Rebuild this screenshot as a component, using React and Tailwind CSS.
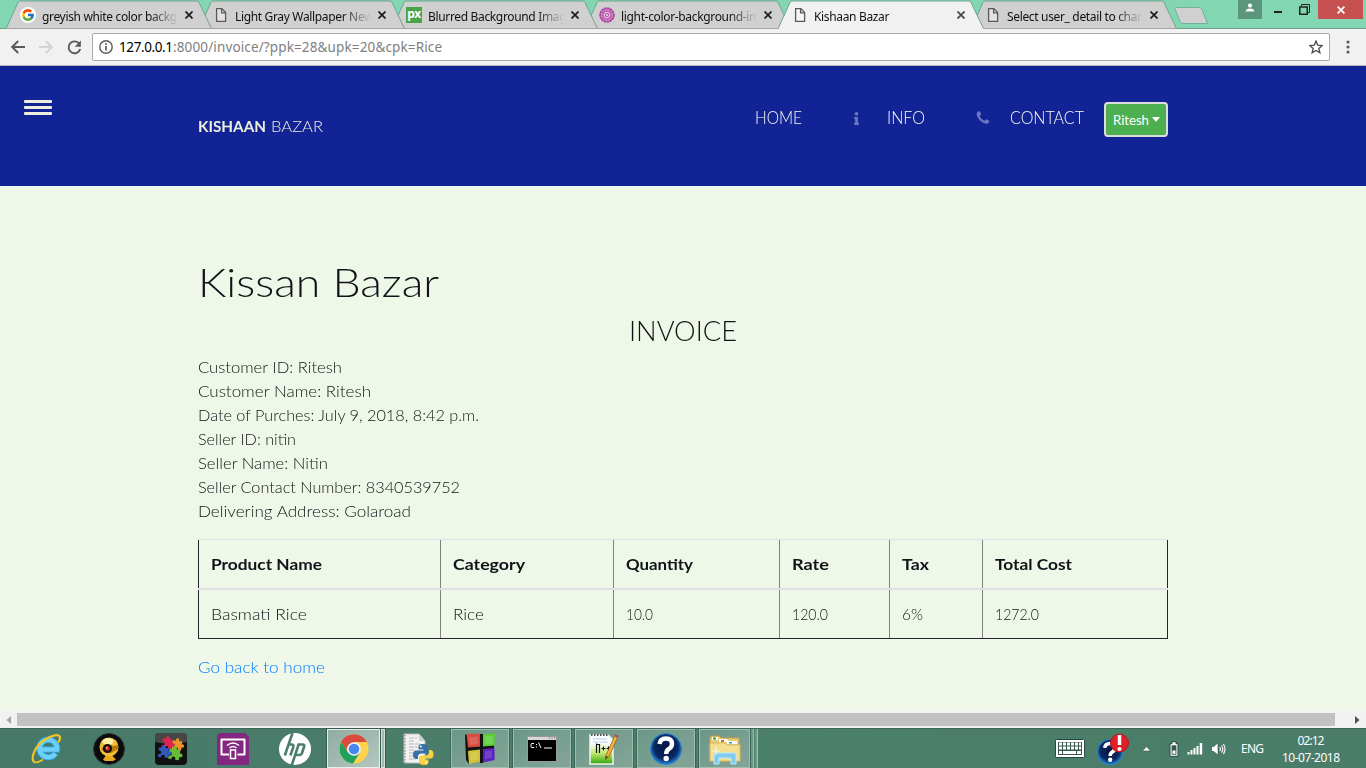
import React, { useLayoutEffect, useRef } from "react";
import { FcGoogle } from "react-icons/fc";
import { FaInfo } from "react-icons/fa";

function Fit({ w, stretch, className = "", children }) {
  const ref = useRef(null);
  useLayoutEffect(() => {
    const el = ref.current;
    const fit = () => {
      el.style.transform = "none";
      el.style.letterSpacing = "0px";
      el.style.width = "auto";
      const natural = el.getBoundingClientRect().width;
      if (stretch) {
        el.style.transformOrigin = "0 50%";
        el.style.transform = `scaleX(${w / natural})`;
      } else {
        const n = Math.max(1, el.textContent.length - 1);
        el.style.letterSpacing = (w - natural) / n + "px";
      }
      el.style.width = w + "px";
    };
    fit();
    if (document.fonts) document.fonts.ready.then(fit);
  }, [w, stretch]);
  return (
    <span ref={ref} className={"inline-block shrink-0 text-left whitespace-nowrap " + className}>
      {children}
    </span>
  );
}

const PageIcon = () => (
  <svg width="16" height="16" viewBox="0 0 16 16" fill="none" stroke="#5a5a5a" strokeWidth="1.3">
    <path d="M3.6 1.6h5.2l3.8 3.9v8.9h-9z" fill="#fafafa" fillOpacity=".45" />
    <path d="M8.6 1.6v4.2h4" />
  </svg>
);

const GoogleIcon = () => (
  <span className="flex size-4 items-center justify-center rounded-full bg-white">
    <FcGoogle size={14} />
  </span>
);

const PxIcon = () => (
  <span className="flex size-4 items-center justify-center bg-[#48a547] pb-[2px] font-['Noto_Sans',sans-serif] text-[12px] leading-none font-bold tracking-[-0.5px] text-white">
    px
  </span>
);

const RosetteIcon = () => (
  <svg width="16" height="16" viewBox="0 0 16 16" fill="none">
    <circle cx="8" cy="8" r="7" fill="#b85cab" stroke="#b03fa0" strokeWidth="1.6" strokeDasharray="2.2 .8" />
    <circle cx="8" cy="8" r="5.2" stroke="#e3bfdd" strokeWidth="1" strokeDasharray="1.6 1.1" />
    <circle cx="8" cy="8" r="2.8" stroke="#ecd3e8" strokeWidth="1" />
    <circle cx="8" cy="8" r="1" fill="#f0dcec" />
  </svg>
);

const tabs = [
  { t: "greyish white color background", icon: GoogleIcon, z: "z-[6]" },
  { t: "Light Gray Wallpaper New", icon: PageIcon, z: "z-[5]" },
  { t: "Blurred Background Images", icon: PxIcon, z: "z-[4]" },
  { t: "light-color-background-images", icon: RosetteIcon, z: "z-[3]" },
  { t: "Kishaan Bazar", icon: PageIcon, z: "z-[7]", active: true },
  { t: "Select user_ detail to change", icon: PageIcon, z: "z-[2]" },
];

function Tab({ t, icon: Icon, z, active }) {
  return (
    <div className={`relative -mr-[13px] h-[29px] w-[206px] shrink-0 ${z}`}>
      <svg className="absolute inset-0" width="206" height="29" viewBox="0 0 206 29">
        <path d="M0 29L1 28L12 2.500Q12.500 1 14 1H191Q192.500 1 193 2.500L205 28L206 29Z" fill={active ? "#f1f1f1" : "#d0d0d0"} />
        <path d="M0 28.500L12 2.500Q12.500 1 14 1H191Q192.500 1 193 2.500L205.500 28.500" fill="none" stroke="#71a38e" />
        {!active && <path d="M0 28.500H206" stroke="#a3a3a3" />}
      </svg>
      <div className="relative flex h-[29px] items-center pl-[14px]">
        <Icon />
        <div className="ml-[6px] w-[136px] overflow-hidden whitespace-nowrap [mask-image:linear-gradient(to_right,#000_108px,transparent_136px)]">
          <span className="font-['Noto_Sans',sans-serif] text-[12px] leading-[18px] tracking-[-0.34px] text-[#111]">{t}</span>
        </div>
        <svg className="ml-[7px]" width="8" height="8" viewBox="0 0 8 8" stroke={active ? "#444" : "#1c1c1c"} strokeWidth="1.7">
          <path d="M.5.5l7 7M7.500.5l-7 7" />
        </svg>
      </div>
    </div>
  );
}

function TabStrip() {
  return (
    <div className="flex h-[29px] items-start bg-[#82d7b2] shadow-[inset_0_-1px_0_#6fa08c]">
      <div className="flex pl-[6px]">
        {tabs.map((tab) => (
          <Tab key={tab.t} {...tab} />
        ))}
      </div>
      <svg className="mt-[6px] ml-[10px]" width="36" height="19" viewBox="0 0 36 19">
        <path d="M2.500 1.500H25Q27 1.500 28 3.500L33.500 17.500H9Q7 17.500 6 15.500L1 3Q.8 1.500 2.500 1.500Z" fill="#d0d0d0" stroke="#71b197" />
      </svg>
      <div className="mr-[3px] ml-auto flex h-[19px] items-stretch">
        <div className="flex w-[24px] items-center justify-center bg-[#5b957c] pb-[3px]">
          <svg width="10" height="10" viewBox="0 0 10 10" fill="#fff">
            <circle cx="5" cy="2.600" r="2.100" />
            <path d="M.6 8.600Q1 5.500 5 5.500T9.400 8.600Z" />
          </svg>
        </div>
        <div className="flex w-[32px] items-end justify-center pb-[6px]">
          <div className="h-[2px] w-[8px] bg-[#222]" />
        </div>
        <div className="flex w-[24px] items-center justify-start pb-[1px] pl-[5px]">
          <svg width="11" height="11" viewBox="0 0 11 11" fill="none" stroke="#222">
            <path d="M2.500 2V.5h8v8H9" />
            <rect x=".75" y="3" width="7.500" height="7.250" strokeWidth="1.500" />
          </svg>
        </div>
        <div className="flex w-[45px] items-center justify-center bg-[#c75050]">
          <svg width="8" height="8" viewBox="0 0 8 8" stroke="#fff" strokeWidth="1.700">
            <path d="M.6.6l6.800 6.800M7.400.6L.6 7.400" />
          </svg>
        </div>
      </div>
    </div>
  );
}

function Toolbar() {
  return (
    <div className="flex h-[37px] items-center border-b border-[#b3b3b3] bg-[#f1f1f1] pl-[11px]">
      <svg width="14" height="14" viewBox="0 0 14 14" fill="none" stroke="#5a5a5a" strokeWidth="1.900">
        <path d="M14 7H1.500M7.200 1L1.200 7l6 6" />
      </svg>
      <svg className="ml-[14px]" width="14" height="14" viewBox="0 0 14 14" fill="none" stroke="#d3d3d3" strokeWidth="1.900">
        <path d="M0 7h12.500M6.800 1l6 6-6 6" />
      </svg>
      <svg className="ml-[14px]" width="15" height="15" viewBox="0 0 15 15" fill="none" stroke="#5a5a5a" strokeWidth="1.900">
        <path d="M12.300 3.800A5.900 5.900 0 1 0 13.200 9" />
        <path d="M13.900.6v6.200H7.700z" fill="#5a5a5a" stroke="none" />
      </svg>
      <div className="ml-[10px] flex h-[28px] w-[1238px] items-center rounded-[2px] border border-[#a9a9a9] bg-white pl-[6px] font-['Noto_Sans',sans-serif] text-[13.500px] text-[#808080]">
        <svg width="14" height="14" viewBox="0 0 14 14" fill="none" stroke="#5a5a5a" strokeWidth="1.400">
          <circle cx="7" cy="7" r="6.200" />
          <path d="M7 6v4.500M7 3.300V5" strokeWidth="1.700" />
        </svg>
        <Fit w={54} className="ml-[6px] text-black">127.0.0.1</Fit>
        <Fit w={269}>:8000/invoice/?ppk=28&amp;upk=20&amp;cpk=Rice</Fit>
        <svg className="mr-[6px] ml-auto" width="14" height="14" viewBox="0 0 14 14" fill="none" stroke="#4c4c4c" strokeWidth="1.300">
          <path d="M7 1l1.700 4.100 4.500.4-3.400 2.900 1.100 4.400L7 10.400l-3.900 2.400 1.100-4.400L.8 5.500l4.500-.4z" />
        </svg>
      </div>
      <svg className="ml-[16px]" width="4" height="14" viewBox="0 0 4 14" fill="#5a5a5a">
        <circle cx="2" cy="2" r="1.600" />
        <circle cx="2" cy="7" r="1.600" />
        <circle cx="2" cy="12" r="1.600" />
      </svg>
    </div>
  );
}

const PhoneIcon = () => (
  <svg className="ml-[50px]" width="16" height="16" viewBox="0 0 1792 1792" fill="#6b76bd">
    <path d="M1600 1240q0 27-10 70.500t-21 68.500q-21 50-122 106-94 51-186 51-27 0-53-3.500t-57.500-12.500-47-14.500-55.500-20.500-49-18q-98-35-175-83-127-79-264-216t-216-264q-48-77-83-175-3-9-18-49t-20.500-55.500-14.500-47-12.500-57.500-3.500-53q0-92 51-186 56-101 106-122 25-11 68.500-21t70.500-10q14 0 21 3 18 6 53 76 11 19 30 54t35 63.500 31 53.500q3 4 17.500 25t21.500 35.500 7 28.500q0 20-28.500 50t-62 55-62 53-28.500 46q0 9 5 22.500t8.500 20.500 14 24 11.500 19q76 137 174 235t235 174q2 1 19 11.500t24 14 20.500 8.500 22.500 5q18 0 46-28.500t53-62 55-62 50-28.500q14 0 28.500 7t35.500 21.500 25 17.500q25 15 53.500 31t63.500 35 54 30q70 35 76 53 3 7 3 21z" />
  </svg>
);

function SiteHeader() {
  return (
    <header className="flex h-[120px] items-start bg-[#122396] pl-6 font-[Lato,sans-serif] text-[16px] leading-6 text-[#eeeedd]">
      <div className="mt-[34px] flex w-[28px] flex-col gap-[3px]">
        <div className="h-[3px] rounded-[1px] bg-[#eeeedd]" />
        <div className="h-[3px] rounded-[1px] bg-[#eeeedd]" />
        <div className="h-[3px] rounded-[1px] bg-[#eeeedd]" />
      </div>
      <div className="mt-[48px] ml-[146px] flex w-[558px] gap-[5px]">
        <Fit stretch w={68} className="font-bold">KISHAAN</Fit>
        <Fit stretch w={52} className="font-light">BAZAR</Fit>
      </div>
      <nav className="mt-[40px] flex items-center font-light text-[#fbfbee]">
        <Fit stretch w={47} className="-ml-px text-[17px]">HOME</Fit>
        <FaInfo size={13} className="ml-[48px] text-[#6b76bd]" />
        <Fit stretch w={38} className="ml-[24px] text-[17px]">INFO</Fit>
        <PhoneIcon />
        <Fit stretch w={74} className="ml-[19px] text-[17px]">CONTACT</Fit>
      </nav>
      <button className="mt-[36px] ml-[20px] flex h-[35px] w-[64px] items-center rounded-[4px] border-2 border-[#dddddd] bg-[#4caf50] pl-[7px] text-[13.300px] text-white">
        <Fit w={36}>Ritesh</Fit>
        <svg className="ml-[3px]" width="8" height="5" viewBox="0 0 8 5" fill="#fff">
          <path d="M0 0h8L4 5z" />
        </svg>
      </button>
    </header>
  );
}

const details = [
  ["Customer ID: Ritesh", 144],
  ["Customer Name: Ritesh", 173],
  ["Date of Purches: July 9, 2018, 8:42 p.m.", 281],
  ["Seller ID: nitin", 98],
  ["Seller Name: Nitin", 130],
  ["Seller Contact Number: 8340539752", 262],
  ["Delivering Address: Golaroad", 213],
];

const heads = [["Product Name", 111], ["Category", 72], ["Quantity", 67], ["Rate", 37], ["Tax", 27], ["Total Cost", 77]];
const cells = [["Basmati Rice", 96], ["Rice", 31], ["10.0", 27], ["120.0", 36], ["6%", 21], ["1272.0", 44]];

function Invoice() {
  return (
    <main className="h-[525px] bg-[#eff7e8] px-[198px] pt-[71px] font-[Lato,sans-serif] text-[16px] leading-6 font-light text-[#101418]">
      <h1 className="mb-2 h-[48px] text-[40px] leading-[50px]">
        <Fit stretch w={241}>Kissan Bazar</Fit>
      </h1>
      <h3 className="mb-2 h-[34px] text-center text-[28px] leading-[34px]">
        <Fit stretch w={108}>INVOICE</Fit>
      </h3>
      <div className="mb-4">
        {details.map(([t, w]) => (
          <div key={t} className="h-6">
            <Fit stretch w={w}>{t}</Fit>
          </div>
        ))}
      </div>
      <div className="w-[970px]">
        <div className="grid h-[51px] grid-cols-[242px_173px_166px_110px_93px_186px] border-t border-b-2 border-[#dee2e6] font-bold">
          {heads.map(([t, w]) => (
            <div key={t} className="flex items-center border-l border-[#7f8380] pl-3 first:border-[#212529] last:border-r last:[border-right-color:#212529]">
              <Fit stretch w={w}>{t}</Fit>
            </div>
          ))}
        </div>
        <div className="grid h-[49px] grid-cols-[242px_173px_166px_110px_93px_186px] border-b border-[#212529]">
          {cells.map(([t, w]) => (
            <div key={t} className="flex items-center border-l border-[#7f8380] pl-3 first:border-[#212529] last:border-r last:[border-right-color:#212529]">
              <Fit stretch w={w}>{t}</Fit>
            </div>
          ))}
        </div>
      </div>
      <a className="mt-4 block h-6 text-[#007bff]">
        <Fit stretch w={127}>Go back to home</Fit>
      </a>
    </main>
  );
}

function Scrollbar() {
  return (
    <div className="flex h-[17px] items-center bg-[#f1f1f1]">
      <div className="flex w-[17px] justify-center">
        <svg width="5" height="8" viewBox="0 0 5 8" fill="#a3a3a3"><path d="M5 0v8L.5 4z" /></svg>
      </div>
      <div className="h-[13px] w-[1318px] bg-[#c1c1c1]" />
      <div className="flex flex-1 justify-end pr-[6px]">
        <svg width="5" height="8" viewBox="0 0 5 8" fill="#505050"><path d="M0 0v8l4.500-4z" /></svg>
      </div>
    </div>
  );
}

const IeIcon = () => (
  <svg width="32" height="32" viewBox="0 0 32 32" fill="none">
    <path d="M24.500 20.500A8.800 8.800 0 1 1 26 16.500H9" stroke="#2b9fdc" strokeWidth="6.400" />
    <path d="M24.500 20.500A8.800 8.800 0 1 1 26 16.500H9" stroke="#6fd0f7" strokeWidth="4.600" />
    <path d="M3.500 29.500C-1 26 3.500 13 14 6.500C21 2 28.500.5 29 4.500C29 6.500 28 8.500 27 9.500" stroke="#f2c521" strokeWidth="2.200" />
    <path d="M3 28.500C5 31 9 28.500 12 26.500" stroke="#f2c521" strokeWidth="1.800" />
  </svg>
);

const WebcamIcon = () => (
  <svg width="32" height="32" viewBox="0 0 32 32">
    <circle cx="16" cy="16" r="15.500" fill="#0b0b0b" stroke="#333" />
    <path d="M10 26.500l3-4h6l4 4-3 1.500h-8z" fill="#e8a91d" />
    <circle cx="16" cy="14" r="9.500" fill="#f2bd35" />
    <ellipse cx="15" cy="8.500" rx="5.500" ry="3.500" fill="#fff0a8" />
    <path d="M8 16l5-5 7 2 5-1v4l-7 4-7-1z" fill="#b77a0c" />
    <circle cx="14.500" cy="15.500" r="4.600" fill="#17130d" />
    <circle cx="14.500" cy="15.500" r="2.200" fill="#dd2622" />
    <circle cx="13.800" cy="14.800" r=".8" fill="#fff" />
  </svg>
);

const piece = "M0 1.500H3.800A2 2 0 1 1 7.200 1.500H11V5A2 2 0 1 1 11 8.500V12H7A2 2 0 1 0 3.500 12H0V8.500A2 2 0 1 0 0 5Z";
const PuzzleIcon = () => (
  <svg width="32" height="32" viewBox="0 0 32 32">
    <rect width="32" height="32" rx="4" fill="#111" />
    <path d="M4 0H28Q32 0 32 4V9Q16 13 0 9V4Q0 0 4 0Z" fill="#5d5d5d" opacity=".7" />
    <path d={piece} transform="translate(8 4) rotate(8) scale(.92)" fill="#e22450" />
    <path d={piece} transform="translate(18 6) rotate(7) scale(.86)" fill="#f0932b" />
    <path d={piece} transform="translate(4 13) rotate(5) scale(.92)" fill="#3158bf" />
    <path d={piece} transform="translate(15 14) rotate(9) scale(.98)" fill="#69bc3b" />
  </svg>
);

const CastIcon = () => (
  <svg width="32" height="32" viewBox="0 0 32 32" fill="none" stroke="#fff">
    <path d="M4 0H28L32 4V32H0V4Q0 0 4 0Z" fill="#832880" stroke="none" />
    <path d="M12 21.500H4.500V6.500H27.500V21.500H20.500" strokeWidth="2" strokeLinejoin="round" />
    <rect x="13.500" y="17" width="5" height="8.500" strokeWidth="1.500" />
    <path d="M10 12.500Q16 7.500 22 12.500M12.500 15Q16 12 19.500 15" strokeWidth="1.500" />
  </svg>
);

const HpIcon = () => (
  <svg width="32" height="32" viewBox="0 0 32 32" fill="none" stroke="#4a7d6a" strokeWidth="2.600">
    <circle cx="16" cy="16" r="16" fill="#fff" stroke="none" />
    <path d="M13.500 0L5.800 22.500M9.200 11.500H12.500Q15 11.500 14.200 14.300L11.400 22.500" />
    <path d="M12.800 32L19.600 11.500H23.600Q25.800 11.500 25 14L23 20Q22.400 22 20.200 22H17" />
  </svg>
);

const ChromeIcon = () => (
  <svg width="30" height="30" viewBox="0 0 30 30">
    <circle cx="15" cy="15" r="14.500" fill="#ffd24d" />
    <path d="M15 15L2.400 7.800A14.500 14.500 0 0 1 27.600 7.800H15Z" fill="#db4b3d" />
    <path d="M2.400 7.800A14.500 14.500 0 0 0 14 29.450L21 18.500L15 15L9 18.500Z" fill="#22a15e" />
    <path d="M2.400 7.800L8.700 18.500A7 7 0 0 1 15 8H27.600A14.500 14.500 0 0 0 2.400 7.800Z" fill="#db4b3d" />
    <circle cx="15" cy="15" r="6.800" fill="#f6f6f6" />
    <circle cx="15" cy="15" r="5.300" fill="#4688f1" />
  </svg>
);

const PythonIcon = () => (
  <svg width="32" height="32" viewBox="0 0 32 32">
    <path d="M2 1H17L23 8V30H2Z" fill="#f2f2f2" stroke="#bcbcbc" />
    <path d="M17 1V8H23Z" fill="#cfd1d1" />
    <path d="M3 2V30" stroke="#777" strokeDasharray="1.500 1.500" />
    <path d="M7 5h8M7 8h6M7 11h12M7 14h9M7 17h5M7 20h4M7 23h5M7 26h7" stroke="#b5b5b5" strokeDasharray="5 1" />
    <path d="M21 11C16.500 11 16.500 13 16.500 14.500V16.500H21.500V17.500H14.500C11.500 17.500 11 20 11 21.500C11 24 12 26 14 26H16V23.500C16 21.500 17.500 20.500 19.500 20.500H23.500C25 20.500 26 19.500 26 18V14.500C26 12 24 11 21 11Z" fill="#3571a5" />
    <path d="M22 32C26.500 32 26.500 30 26.500 28.500V26.500H21.500V25.500H28.500C31 25.500 31.500 23 31.500 21.500C31.500 19 30.500 17 28.500 17H27V19.500C27 21.500 25.500 22.500 23.500 22.500H19.500C18 22.500 17 23.500 17 25V28.500C17 31 19 32 22 32Z" fill="#fbd140" />
    <circle cx="18.800" cy="13.500" r="1" fill="#fff" />
    <circle cx="24" cy="29.500" r="1" fill="#fff" />
  </svg>
);

const CubesIcon = () => (
  <svg width="32" height="32" viewBox="0 0 32 32">
    <path d="M1 1L4 3L5 31L2 27ZM16 1H19V30H16ZM3 14L30 12V16L3 18Z" fill="#151111" />
    <path d="M2.500 1L16 .5V13.500L4 14.500Z" fill="#d84b3e" />
    <path d="M19 1L31 .5L30.500 12.500L19 13.500Z" fill="#5bcd39" />
    <path d="M4 18L16 16.500V28.500L5 31Z" fill="#cfc234" />
    <path d="M19 16L30.500 15V27L19 29.500Z" fill="#5a22c0" />
    <path d="M5 4.500L14 3.500V11L6 12ZM21 3.500L29 3V10.500L21 11.500ZM6 20L14 18.500V26L7 28ZM21 18L28 17.500V24.500L21 26.500Z" fill="#fff" opacity=".14" />
  </svg>
);

const ConsoleIcon = () => (
  <svg width="30" height="26" viewBox="0 0 30 26">
    <rect x=".5" y=".5" width="29" height="25" fill="#000" stroke="#999" />
    <rect x="1" y="1" width="28" height="3" fill="#d6d9d8" />
    <path d="M22 2h1M24.500 2h1M27 2h1" stroke="#555" />
    <path d="M7 7.500H5Q4 7.500 4 8.500V10.500Q4 11.500 5 11.500H7M9.500 8v1M9.500 10.500v1M11.500 6.500L14 12M17 12H25" fill="none" stroke="#fff" />
  </svg>
);

const NotepadIcon = () => (
  <svg width="32" height="32" viewBox="0 0 32 32">
    <defs>
      <linearGradient id="np" x1="0" y1="0" x2="0" y2="1">
        <stop offset=".3" stopColor="#f8fbff" />
        <stop offset=".6" stopColor="#c9ec77" />
        <stop offset="1" stopColor="#35a40d" />
      </linearGradient>
    </defs>
    <path d="M2 2H20L25 7V31H2Z" fill="url(#np)" stroke="#eef5ec" strokeWidth="1.500" />
    <path d="M3 2H20" stroke="#555" strokeWidth="2" strokeDasharray="1.500 1.500" />
    <path d="M5 6h14M5 9h15" stroke="#bdccdf" />
    <path d="M8.500 20V10.500M8.500 11.500H11.500V20M13.500 15.500h4M15.500 13.500v4M18.500 15.500h4M20.500 13.500v4" fill="none" stroke="#111" strokeWidth="1.200" />
    <path d="M28 4L19 24" stroke="#94611a" strokeWidth="4" />
    <path d="M28 4L19 24" stroke="#f7b33f" strokeWidth="2.500" />
    <path d="M28 4L29 2" stroke="#b64a50" strokeWidth="4" />
    <path d="M17.500 22.500L17 27L20.500 24Z" fill="#6c491d" />
  </svg>
);

const HelpIcon = ({ size = 32 }) => (
  <svg width={size} height={size} viewBox="0 0 32 32">
    <defs>
      <radialGradient id="hb" cx=".5" cy=".45" r=".55">
        <stop offset="0" stopColor="#06133f" />
        <stop offset=".7" stopColor="#0a2861" />
        <stop offset="1" stopColor="#2489dc" />
      </radialGradient>
    </defs>
    <circle cx="16" cy="16" r="15.500" fill="url(#hb)" stroke="#2484d2" />
    <path d="M9.500 11Q10 5.500 16 5.500T22 11Q22 14 18.800 16Q16.200 17.500 16.200 21" fill="none" stroke="#fff" strokeWidth="4.400" />
    <circle cx="16.200" cy="25.500" r="2.700" fill="#fff" />
  </svg>
);

const FolderIcon = () => (
  <svg width="34" height="32" viewBox="0 0 34 32">
    <path d="M2 5Q2 3 4 3H11L13 5H31V28H2Z" fill="#e8cd77" stroke="#c59e49" />
    <path d="M4 4h6v3H4z" fill="#fff" /><path d="M5 4.500h3v2H5z" fill="#16a526" />
    <path d="M11 6h8l2 3H11z" fill="#fff" /><path d="M13 7h3v2h-3z" fill="#dd5f2f" />
    <path d="M19 8h10v3H19z" fill="#fff" /><path d="M21 9h3v1.500h-3z" fill="#1997d5" />
    <path d="M2 10H17L20 12H32V28H2Z" fill="#f4df91" stroke="#d9ba62" />
    <path d="M6 31V22Q6 20 8 20H26Q28 20 28 22V31H23V25H11V31Z" fill="#83cbed" stroke="#b6eafd" />
    <path d="M8 14v8M4 18h8" stroke="#fff" opacity=".7" />
  </svg>
);

const pinned = [IeIcon, WebcamIcon, PuzzleIcon, CastIcon, HpIcon];
const running = [CubesIcon, ConsoleIcon, NotepadIcon, HelpIcon];

function Taskbar() {
  return (
    <footer className="flex h-[40px] items-center border-t border-[#3c6554] bg-linear-to-r from-[#477969] via-[#4b806b] to-[#4a7d69] pl-[16px] font-['Noto_Sans',sans-serif] text-white">
      {pinned.map((Icon, i) => (
        <div key={i} className="flex w-[62px] justify-center"><Icon /></div>
      ))}
      <div className="flex h-[39px] w-[61px] pl-[1px]">
        <div className="flex w-[53px] items-center justify-center border border-[#e7eeeb] bg-linear-to-br from-[#8fada1] to-[#b3c7bf] outline outline-[#34594c]">
          <ChromeIcon />
        </div>
        <div className="ml-[1px] w-[4px] border border-[#d7e2dd] bg-[#9fb9af] outline outline-[#34594c]" />
      </div>
      <div className="flex w-[62px] justify-center"><PythonIcon /></div>
      {running.map((Icon, i) => (
        <div key={i} className="flex h-[39px] w-[62px] justify-center px-[2px]">
          <div className="flex w-[58px] items-center justify-center border border-[#a1bcb1] bg-linear-to-br from-[#6b9787] to-[#83a598] outline outline-[#3b6556]">
            <Icon />
          </div>
        </div>
      ))}
      <div className="flex h-[39px] w-[62px] gap-[1px] pl-[2px]">
        <div className="flex w-[51px] items-center justify-center border border-[#a1bcb1] bg-linear-to-br from-[#6b9787] to-[#83a598] outline outline-[#3b6556]">
          <FolderIcon />
        </div>
        <div className="w-[3px] border-r border-[#a1bcb1] bg-[#6b9787]" />
        <div className="w-[3px] border-r border-[#a1bcb1] bg-[#6b9787]" />
      </div>
      <div className="ml-auto flex items-center">
        <svg width="30" height="19" viewBox="0 0 30 19" fill="none">
          <rect x=".5" y=".5" width="29" height="18" rx="1" fill="#fff" stroke="#28463b" />
          <rect x="3" y="3" width="24" height="13" fill="#38584c" />
          <path d="M4 5h22M4 9h22" stroke="#fff" strokeWidth="3" strokeDasharray="3 1" />
          <path d="M4 13.500h3M8 13.500h13M22 13.500h4" stroke="#fff" strokeWidth="3" />
        </svg>
        <div className="relative ml-[12px] flex h-[32px] w-[32px] items-end">
          <HelpIcon size={26} />
          <svg className="absolute top-0 right-0" width="19" height="20" viewBox="0 0 19 20">
            <circle cx="9.500" cy="10" r="9" fill="#df2028" stroke="#b51720" />
            <path d="M9.500 2V12" stroke="#fff" strokeWidth="3.500" />
            <circle cx="9.500" cy="16" r="2" fill="#fff" />
          </svg>
        </div>
        <svg className="ml-[13px]" width="9" height="6" viewBox="0 0 9 6"><path d="M.5 5L4.500.5L8.500 5Z" fill="#fff" stroke="#35594d" strokeWidth=".6" /></svg>
        <svg className="ml-[18px]" width="10" height="16" viewBox="0 0 10 16">
          <path d="M3 .7h4v2h2v12.600H1V2.700h2z" fill="#fff" stroke="#28463b" />
          <rect x="2.600" y="4.300" width="4.800" height="9.400" fill="#33574a" />
          <rect x="3.500" y="9.500" width="3" height="3.300" fill="#fff" />
        </svg>
        <svg className="ml-[8px]" width="16" height="13" viewBox="0 0 16 13" fill="#fff">
          <path d="M.5 10h2v2.500h-2zM3.500 8h2v4.500h-2zM6.500 6h2v6.500h-2zM9.500 4h2v8.500h-2zM12.700 1h2.500v11.500h-2.500z" />
        </svg>
        <svg className="ml-[8px]" width="15" height="14" viewBox="0 0 15 14" fill="none" stroke="#fff" strokeWidth="1.100">
          <path d="M.6 4.500h2.200L7 .8v12.400L2.800 9.500H.6z" fill="#fff" stroke="#28463b" strokeWidth=".6" />
          <path d="M8.800 5q1.200 2 0 4M10.600 3.500q2.300 3.500 0 7M12.400 2q3.200 5 0 10" />
        </svg>
        <Fit w={23} className="ml-[15px] text-[12px] leading-4">ENG</Fit>
        <div className="ml-[18px] flex w-[58px] flex-col items-center text-[12px] leading-[17px]">
          <Fit w={27}>02:12</Fit>
          <Fit w={58}>10-07-2018</Fit>
        </div>
        <div className="w-[26px]" />
      </div>
    </footer>
  );
}

export default function App() {
  return (
    <div className="flex h-[768px] w-[1366px] flex-col overflow-hidden bg-[#eff7e8]">
      <TabStrip />
      <Toolbar />
      <SiteHeader />
      <Invoice />
      <Scrollbar />
      <Taskbar />
    </div>
  );
}
